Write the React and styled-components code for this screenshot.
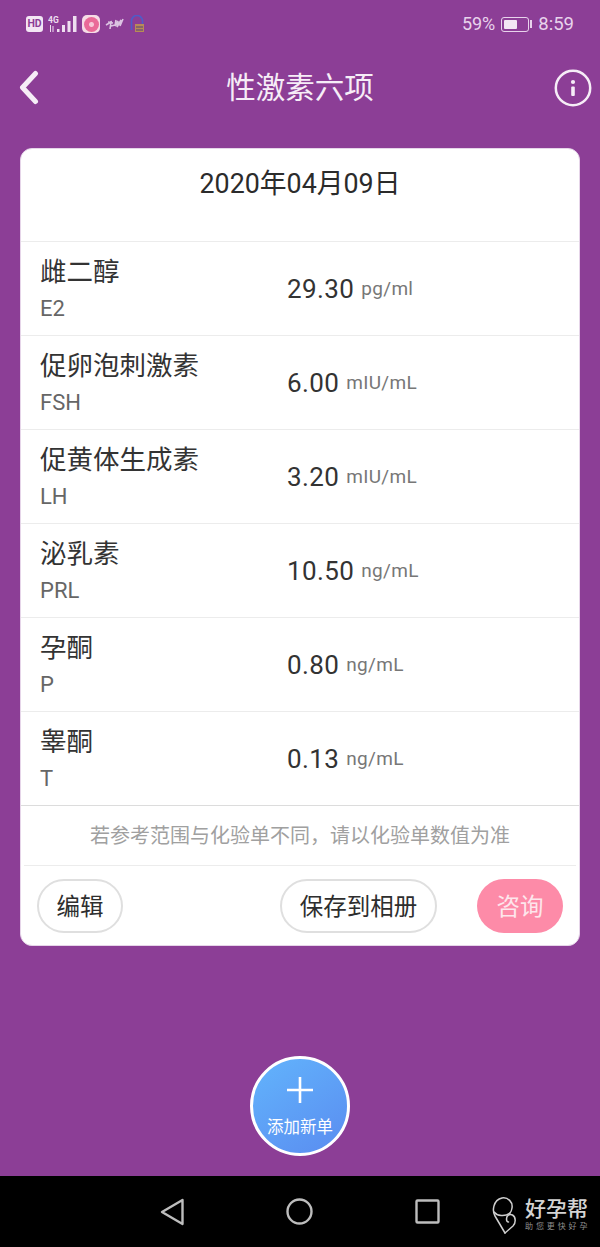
import React from "react";
import styled, { createGlobalStyle } from "styled-components";

const Global = createGlobalStyle`
  html, body { margin: 0; padding: 0; }
  body { width: 600px; background: #8c3e96; font-family: Roboto, "Noto Sans CJK SC", sans-serif; }
  * { box-sizing: border-box; }
`;

const Page = styled.div`
  width: 600px;
  height: 1247px;
  display: flex;
  flex-direction: column;
  background: #8c3e96;
  overflow: hidden;
`;

const StatusBar = styled.div`
  height: 48px;
  padding: 13px 26px 0;
  display: flex;
  justify-content: space-between;
  align-items: flex-start;
  color: #e8d3ec;
`;
const StatusGroup = styled.div`
  display: flex;
  align-items: center;
  height: 22px;
  gap: ${(p) => p.$gap || 4}px;
`;
const HdBadge = styled.span`
  width: 17px;
  height: 16px;
  border-radius: 3px;
  background: #f3e6f4;
  color: #8c3e96;
  font-size: 10.5px;
  font-weight: 700;
  line-height: 16px;
  text-align: center;
`;
const AppIcon = styled.span`
  width: 18px;
  height: 18px;
  border-radius: 5px;
  background: #f6dce6;
  display: flex;
  align-items: center;
  justify-content: center;
`;
const AppDisc = styled.span`
  width: 15px;
  height: 15px;
  border-radius: 50%;
  background: radial-gradient(circle, #f7c7d8 0 2px, #ea6a98 3px);
`;
const StatusText = styled.span`
  font-size: ${(p) => p.$size || 18}px;
  line-height: 22px;
`;
const BatteryWrap = styled.span`
  display: flex;
  align-items: center;
  gap: 1px;
  margin: 0 1px;
`;
const Battery = styled.span`
  width: 28px;
  height: 15px;
  border: 1px solid #e8d3ec;
  border-radius: 3px;
  padding: 2px;
  display: flex;
`;
const BatteryFill = styled.span`
  height: 100%;
  background: #f3e6f4;
  border-radius: 1px;
`;
const BatteryCap = styled.span`
  width: 2px;
  height: 8px;
  background: #e8d3ec;
`;

const Header = styled.header`
  height: 80px;
  padding: 0 8px 0 19px;
  display: grid;
  grid-template-columns: 1fr auto 1fr;
  align-items: center;
`;
const Title = styled.h1`
  margin: 0;
  font-size: 29.5px;
  font-weight: 400;
  line-height: 80px;
  padding-right: 11px;
  color: #f6edf7;
`;
const HeaderIcon = styled.span`
  display: flex;
  align-items: center;
  justify-content: ${(p) => (p.$end ? "flex-end" : "flex-start")};
`;

const Main = styled.main`
  flex: 1;
  padding: 20px;
  display: flex;
  flex-direction: column;
  align-items: center;
  justify-content: space-between;
`;
const Card = styled.section`
  width: 560px;
  height: 798px;
  background: #fff;
  border-radius: 12px;
  border: 1px solid #e6d5e9;
  display: flex;
  flex-direction: column;
  overflow: hidden;
`;
const DateRow = styled.div`
  height: 92px;
  padding-top: 17px;
  text-align: center;
  font-size: 26.8px;
  line-height: 36px;
  color: #2b2b2b;
`;
const Row = styled.div`
  height: 94px;
  border-top: 1px solid #ececec;
  display: grid;
  grid-template-columns: 247px 1fr;
  padding-left: 19px;
  align-items: center;
`;
const Names = styled.div`
  display: flex;
  flex-direction: column;
  padding-top: 1px;
`;
const Name = styled.div`
  font-size: 26.5px;
  line-height: 36px;
  color: #333;
`;
const Code = styled.div`
  font-size: 22px;
  line-height: 32px;
  color: #666;
  margin-top: 3px;
`;
const Value = styled.div`
  display: flex;
  align-items: center;
  gap: 7px;
  margin-top: 1px;
  line-height: 32px;
`;
const Num = styled.span`
  font-size: 26px;
  letter-spacing: 0.4px;
  color: #333;
`;
const Unit = styled.span`
  font-size: 19px;
  letter-spacing: 0.3px;
  color: #777;
`;
const Note = styled.div`
  height: 60px;
  border-top: 1px solid #dcdcdc;
  text-align: center;
  font-size: 20px;
  line-height: 60px;
  color: #a0a0a0;
`;
const Actions = styled.div`
  flex: 1;
  margin: 0 3px;
  border-top: 1px solid #ececec;
  padding: 13px 13px 0;
  display: flex;
  align-items: flex-start;
`;
const Btn = styled.button`
  width: ${(p) => p.$w}px;
  height: 54px;
  padding: 2px 0 0;
  border-radius: 27px;
  border: 2px solid #dfdfdf;
  background: #fff;
  color: #2e2e2e;
  font: 400 23.5px/48px Roboto, "Noto Sans CJK SC", sans-serif;
  margin-left: ${(p) => (p.$push ? "auto" : "0")};
`;
const Primary = styled(Btn)`
  margin-left: 40px;
  border: none;
  background: #fd8ba8;
  color: #fde6ec;
`;

const Fab = styled.button`
  width: 100px;
  height: 100px;
  flex: none;
  border-radius: 50%;
  border: 3px solid #fff;
  background: linear-gradient(145deg, #62b4fc, #5a8cf0);
  color: #fff;
  padding: 17px 0 0;
  display: flex;
  flex-direction: column;
  align-items: center;
  gap: 12px;
  font: 400 16.5px/24px Roboto, "Noto Sans CJK SC", sans-serif;
`;

const NavBar = styled.nav`
  position: relative;
  height: 71px;
  background: #000;
  display: flex;
  align-items: center;
  justify-content: center;
  gap: 102px;
`;
const Watermark = styled.div`
  position: absolute;
  left: 490px;
  top: 20px;
  display: flex;
  gap: 5px;
  color: #d4d4d4;
`;
const Brand = styled.div`
  display: flex;
  flex-direction: column;
`;
const BrandName = styled.span`
  font-size: 21px;
  font-weight: 500;
  line-height: 26px;
  white-space: nowrap;
`;
const BrandSub = styled.span`
  font-size: 8px;
  line-height: 10px;
  letter-spacing: 2.9px;
  color: #8e8e8e;
  white-space: nowrap;
`;

const rows = [
  ["雌二醇", "E2", "29.30", "pg/ml"],
  ["促卵泡刺激素", "FSH", "6.00", "mIU/mL"],
  ["促黄体生成素", "LH", "3.20", "mIU/mL"],
  ["泌乳素", "PRL", "10.50", "ng/mL"],
  ["孕酮", "P", "0.80", "ng/mL"],
  ["睾酮", "T", "0.13", "ng/mL"],
];

const Signal = () => (
  <svg width="29" height="18" viewBox="0 0 29 18" fill="#eedff0">
    <text x="0" y="7.5" fontSize="8.5" fontWeight="700" fontFamily="Roboto">4G</text>
    <rect x="2" y="10" width="1" height="7" />
    <rect x="4.5" y="11" width="1" height="6" />
    <rect x="9" y="14" width="2.5" height="3" />
    <rect x="14" y="10" width="3" height="7" />
    <rect x="19.5" y="6" width="3" height="11" />
    <rect x="25" y="1" width="3.5" height="16" />
  </svg>
);

const Scribble = () => (
  <svg width="20" height="14" viewBox="0 0 20 14" fill="none" stroke="#dcc3e2" strokeWidth="1.6">
    <path d="M1 8l5-3-1 7M3 5l5 1M6 9l4-1M11 3l-1 6 3-5-1 6 4-7-1 6 3-7" />
  </svg>
);

const SimIcon = () => (
  <svg width="15" height="18" viewBox="0 0 15 18" fill="none">
    <path d="M1.500 15V6a5.500 5.500 0 0 1 11 0v3" stroke="#4f5cc8" strokeWidth="1.6" />
    <rect x="5" y="9" width="9" height="8" fill="#b88a58" />
    <path d="M6 12h7M6 15h7" stroke="#55407a" strokeWidth="1" />
  </svg>
);

export default function App() {
  return (
    <Page>
      <Global />
      <StatusBar>
        <StatusGroup $gap={5}>
          <HdBadge>HD</HdBadge>
          <Signal />
          <AppIcon><AppDisc /></AppIcon>
          <Scribble />
          <SimIcon />
        </StatusGroup>
        <StatusGroup $gap={5}>
          <StatusText>59%</StatusText>
          <BatteryWrap>
            <Battery><BatteryFill style={{ width: "59%" }} /></Battery>
            <BatteryCap />
          </BatteryWrap>
          <StatusText $size={18.5}>8:59</StatusText>
        </StatusGroup>
      </StatusBar>
      <Header>
        <HeaderIcon>
          <svg width="24" height="36" viewBox="0 0 24 36" fill="none" stroke="#f6edf7" strokeWidth="5" strokeLinecap="round" strokeLinejoin="round">
            <path d="M16.5 3.5L3.5 17.5l13 14" />
          </svg>
        </HeaderIcon>
        <Title>性激素六项</Title>
        <HeaderIcon $end>
          <svg width="38" height="38" viewBox="0 0 38 38" fill="none">
            <circle cx="19" cy="19" r="17.2" stroke="#f6edf7" strokeWidth="2.5" />
            <rect x="17.2" y="17.5" width="3.6" height="9.5" rx="1" fill="#f6edf7" />
            <circle cx="19" cy="13" r="2.1" fill="#f6edf7" />
          </svg>
        </HeaderIcon>
      </Header>
      <Main>
        <Card>
          <DateRow>2020年04月09日</DateRow>
          {rows.map(([name, code, num, unit]) => (
            <Row key={code}>
              <Names>
                <Name>{name}</Name>
                <Code>{code}</Code>
              </Names>
              <Value>
                <Num>{num}</Num>
                <Unit>{unit}</Unit>
              </Value>
            </Row>
          ))}
          <Note>若参考范围与化验单不同，请以化验单数值为准</Note>
          <Actions>
            <Btn $w={86}>编辑</Btn>
            <Btn $w={157} $push>保存到相册</Btn>
            <Primary $w={86}>咨询</Primary>
          </Actions>
        </Card>
        <Fab>
          <svg width="28" height="28" viewBox="0 0 28 28" stroke="#fff" strokeWidth="2.6">
            <path d="M14 1v26M1 14h26" />
          </svg>
          添加新单
        </Fab>
      </Main>
      <NavBar>
        <svg width="24" height="28" viewBox="0 0 24 28" fill="none" stroke="#bdbdbd" strokeWidth="2.4" strokeLinejoin="round">
          <path d="M22.5 2L2 14l20.5 12z" />
        </svg>
        <svg width="27" height="27" viewBox="0 0 27 27" fill="none" stroke="#bdbdbd" strokeWidth="2.4">
          <circle cx="13.5" cy="13.5" r="12" />
        </svg>
        <svg width="25" height="25" viewBox="0 0 25 25" fill="none" stroke="#bdbdbd" strokeWidth="2.4" strokeLinejoin="round">
          <rect x="1.5" y="1.5" width="22" height="22" rx="1" />
        </svg>
        <Watermark>
          <svg width="30" height="40" viewBox="0 0 30 40" fill="none" stroke="#cfcfcf" strokeWidth="1.5" strokeLinecap="round" strokeLinejoin="round">
            <path d="M15 37L5 20C2 15 3 4 12 2c6-1 11 4 10 10-.3 2-1 4-2 5" />
            <path d="M15 37l8-7c3-3 3-9-.5-11-3-1.500-6 .5-6 4 0 2 1 3 2 3" />
            <path d="M4 16c3 4 11 5 16 1" />
          </svg>
          <Brand>
            <BrandName>好孕帮</BrandName>
            <BrandSub>助您更快好孕</BrandSub>
          </Brand>
        </Watermark>
      </NavBar>
    </Page>
  );
}
